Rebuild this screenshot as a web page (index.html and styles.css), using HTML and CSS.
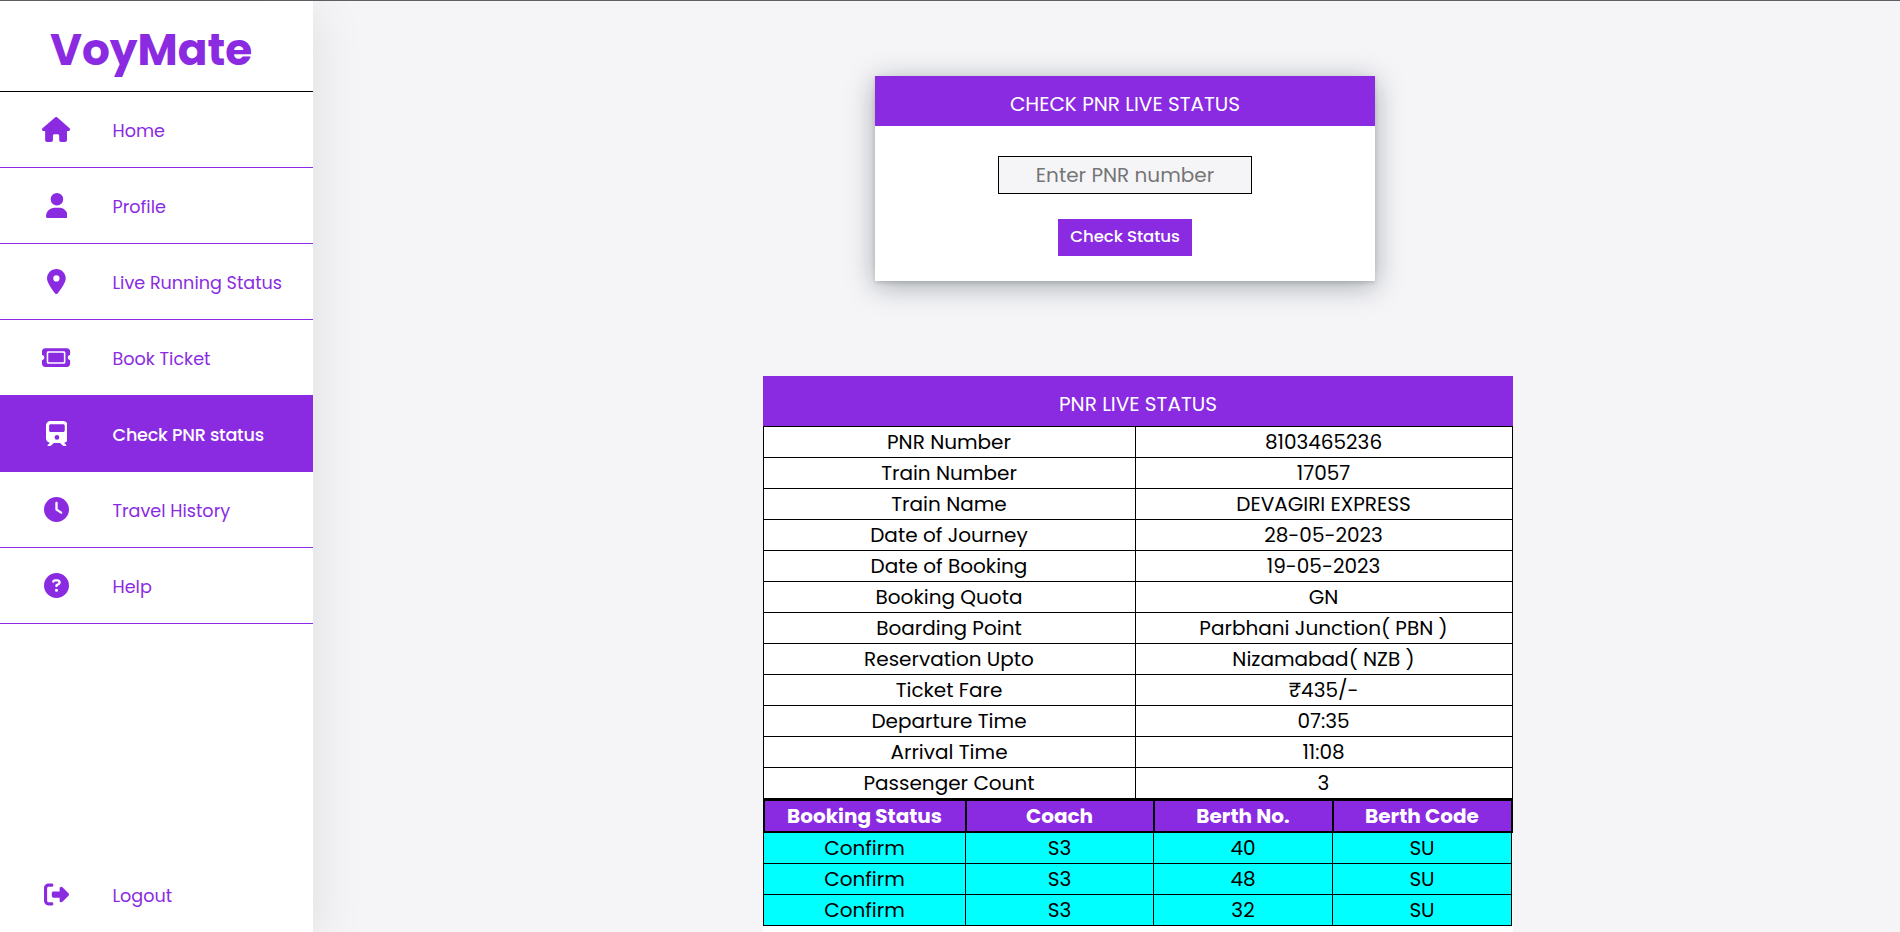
FILE: index.html
```html
<!DOCTYPE html>
<html lang="en">
<head>
<meta charset="utf-8">
<title>VoyMate - Check PNR status</title>
<link rel="stylesheet" href="styles.css">
</head>
<body>
<div class="app">
  <nav class="sidebar">
    <div class="logo"><span>VoyMate</span></div>
    <a class="nav-item"><span class="icon"><svg viewBox="0 0 576 512"><path d="M575.8 255.5c0 18-15 32.1-32 32.1h-32l.7 160.2c0 2.7-.2 5.4-.5 8.1V472c0 22.1-17.9 40-40 40H456c-1.1 0-2.2 0-3.3-.1c-1.4 .1-2.8 .1-4.2 .1H416 392c-22.1 0-40-17.9-40-40V448 384c0-17.7-14.3-32-32-32H256c-17.7 0-32 14.3-32 32v64 24c0 22.1-17.9 40-40 40H160 128.1c-1.5 0-3-.1-4.5-.2c-1.2 .1-2.4 .2-3.6 .2H104c-22.1 0-40-17.9-40-40V360c0-.9 0-1.9 .1-2.8V287.6H32c-18 0-32-14-32-32.1c0-9 3-17 10-24L266.4 8c7-7 15-8 22-8s15 2 21 7L564.8 231.5c8 7 12 15 11 24z"/></svg></span><span class="label">Home</span></a>
    <a class="nav-item"><span class="icon"><svg viewBox="0 0 448 512"><path d="M224 256A128 128 0 1 0 224 0a128 128 0 1 0 0 256zm-45.7 48C79.8 304 0 383.8 0 482.3C0 498.7 13.3 512 29.7 512H418.3c16.4 0 29.7-13.3 29.7-29.7C448 383.8 368.2 304 269.7 304H178.3z"/></svg></span><span class="label">Profile</span></a>
    <a class="nav-item"><span class="icon"><svg viewBox="0 0 384 512"><path d="M215.7 499.2C267 435 384 279.4 384 192C384 86 298 0 192 0S0 86 0 192c0 87.4 117 243 168.3 307.2c12.3 15.3 35.1 15.3 47.4 0zM192 128a64 64 0 1 1 0 128 64 64 0 1 1 0-128z"/></svg></span><span class="label">Live Running Status</span></a>
    <a class="nav-item"><span class="icon"><svg viewBox="0 0 576 512"><path d="M64 64C28.7 64 0 92.7 0 128v64c0 8.8 7.4 15.7 15.7 18.6C34.5 217.1 48 235 48 256s-13.5 38.9-32.3 45.4C7.4 304.3 0 311.2 0 320v64c0 35.3 28.7 64 64 64H512c35.3 0 64-28.7 64-64V320c0-8.8-7.4-15.7-15.7-18.6C541.5 294.9 528 277 528 256s13.5-38.9 32.3-45.4c8.3-2.9 15.7-9.8 15.7-18.6V128c0-35.3-28.7-64-64-64H64zm64 112l0 160c0 8.8 7.2 16 16 16H432c8.8 0 16-7.2 16-16V176c0-8.8-7.2-16-16-16H144c-8.8 0-16 7.2-16 16zM96 160c0-17.7 14.3-32 32-32H448c17.7 0 32 14.3 32 32V352c0 17.7-14.3 32-32 32H128c-17.7 0-32-14.3-32-32V160z"/></svg></span><span class="label">Book Ticket</span></a>
    <a class="nav-item active"><span class="icon"><svg viewBox="0 0 448 512"><path d="M96 0C43 0 0 43 0 96V352c0 48 35.2 87.7 81.1 94.9l-46 46C28.1 499.9 33.1 512 43 512H82.7c8.5 0 16.6-3.4 22.6-9.4L160 448H288l54.6 54.6c6 6 14.1 9.4 22.6 9.4H405c10 0 15-12.1 7.9-19.1l-46-46c46-7.1 81.1-46.9 81.1-94.9V96c0-53-43-96-96-96H96zM64 96c0-17.7 14.3-32 32-32H352c17.7 0 32 14.3 32 32v96c0 17.7-14.3 32-32 32H96c-17.7 0-32-14.3-32-32V96zM224 288a48 48 0 1 1 0 96 48 48 0 1 1 0-96z"/></svg></span><span class="label">Check PNR status</span></a>
    <a class="nav-item"><span class="icon"><svg viewBox="0 0 512 512"><path d="M256 0a256 256 0 1 1 0 512A256 256 0 1 1 256 0zM232 120V256c0 8 4 15.5 10.7 20l96 64c11 7.4 25.9 4.4 33.3-6.7s4.4-25.9-6.7-33.3L280 243.2V120c0-13.3-10.7-24-24-24s-24 10.7-24 24z"/></svg></span><span class="label">Travel History</span></a>
    <a class="nav-item"><span class="icon"><svg viewBox="0 0 512 512"><path d="M256 512A256 256 0 1 0 256 0a256 256 0 1 0 0 512zM169.8 165.3c7.9-22.3 29.1-37.3 52.8-37.3h58.3c34.9 0 63.1 28.3 63.1 63.1c0 22.6-12.1 43.5-31.7 54.8L280 264.4c-.2 13-10.9 23.6-24 23.6c-13.3 0-24-10.7-24-24V250.5c0-8.6 4.6-16.5 12.1-20.8l44.3-25.4c4.7-2.7 7.6-7.7 7.6-13.1c0-8.4-6.8-15.1-15.1-15.1H222.6c-3.4 0-6.4 2.1-7.5 5.3l-.4 1.2c-4.4 12.5-18.2 19-30.6 14.6s-19-18.2-14.6-30.6l.4-1.2zM224 352a32 32 0 1 1 64 0 32 32 0 1 1 -64 0z"/></svg></span><span class="label">Help</span></a>
    <a class="nav-item logout"><span class="icon"><svg viewBox="0 0 512 512"><path d="M377.9 105.9L500.7 228.7c7.2 7.2 11.3 17.1 11.3 27.3s-4.1 20.1-11.3 27.3L377.9 406.1c-6.4 6.4-15 9.9-24 9.9c-18.7 0-33.9-15.2-33.9-33.9l0-62.1-128 0c-17.7 0-32-14.3-32-32l0-64c0-17.7 14.3-32 32-32l128 0 0-62.1c0-18.7 15.2-33.9 33.9-33.9c9 0 17.6 3.6 24 9.9zM160 96L96 96c-17.7 0-32 14.3-32 32l0 256c0 17.7 14.3 32 32 32l64 0c17.7 0 32 14.3 32 32s-14.3 32-32 32l-64 0c-53 0-96-43-96-96L0 128C0 75 43 32 96 32l64 0c17.7 0 32 14.3 32 32s-14.3 32-32 32z"/></svg></span><span class="label">Logout</span></a>
  </nav>

  <main class="main">
    <form class="card">
      <h2 class="title">CHECK PNR LIVE STATUS</h2>
      <input class="pnr-input" type="text" placeholder="Enter PNR number">
      <button class="submit" type="button">Check Status</button>
    </form>

    <section class="result">
      <h2 class="title">PNR LIVE STATUS</h2>
      <dl class="details">
        <dt>PNR Number</dt><dd>8103465236</dd>
        <dt>Train Number</dt><dd>17057</dd>
        <dt>Train Name</dt><dd>DEVAGIRI EXPRESS</dd>
        <dt>Date of Journey</dt><dd>28-05-2023</dd>
        <dt>Date of Booking</dt><dd>19-05-2023</dd>
        <dt>Booking Quota</dt><dd>GN</dd>
        <dt>Boarding Point</dt><dd>Parbhani Junction( PBN )</dd>
        <dt>Reservation Upto</dt><dd>Nizamabad( NZB )</dd>
        <dt>Ticket Fare</dt><dd>₹435/-</dd>
        <dt>Departure Time</dt><dd>07:35</dd>
        <dt>Arrival Time</dt><dd>11:08</dd>
        <dt>Passenger Count</dt><dd>3</dd>
      </dl>
      <div class="berths head">
        <span>Booking Status</span><span>Coach</span><span>Berth No.</span><span>Berth Code</span>
      </div>
      <div class="berths"><span>Confirm</span><span>S3</span><span>40</span><span>SU</span></div>
      <div class="berths"><span>Confirm</span><span>S3</span><span>48</span><span>SU</span></div>
      <div class="berths"><span>Confirm</span><span>S3</span><span>32</span><span>SU</span></div>
    </section>
  </main>
</div>
</body>
</html>
```
FILE: styles.css
```css
* { box-sizing: border-box; margin: 0; padding: 0; }

body {
  height: 932px;
  overflow: hidden;
  background: #f5f5f8;
  font-family: Poppins, Inter, "Open Sans", sans-serif;
  font-weight: 400;
  color: #000;
}

.app {
  display: flex;
  height: 932px;
  border-top: 1px solid #606064;
}

/* Sidebar */
.sidebar {
  display: flex;
  flex-direction: column;
  width: 313px;
  flex: none;
  background: #fff;
  box-shadow: 0 10px 50px rgba(0, 0, 0, .1);
}
.logo {
  height: 91px;
  padding: 7px 0 0 50px;
  border-bottom: 1px solid #000;
  color: #8a2be2;
  font-size: 43.8px;
  line-height: 83px;
  font-weight: 700;
}
.nav-item {
  display: flex;
  align-items: center;
  height: 76px;
  padding-left: 36px;
  border-bottom: 1px solid #8a2be2;
  color: #8a2be2;
  font-size: 17.6px;
}
.nav-item .icon {
  display: flex;
  justify-content: center;
  width: 41px;
  margin-right: 35.5px;
}
.nav-item svg { height: 25px; fill: currentColor; }
.nav-item .label { padding-top: 3px; white-space: nowrap; }
.nav-item.active {
  height: 77px;
  margin-top: -1px;
  padding-top: 1px;
  background: #8a2be2;
  color: #fff;
  font-weight: 500;
  letter-spacing: -.22px;
}
.nav-item.logout { margin-top: auto; border-bottom: 0; }

/* Main column */
.main { flex: 1; padding-top: 75px; }
.title {
  width: 100%;
  height: 50px;
  padding-top: 7px;
  background: #8a2be2;
  color: #fff;
  font-size: 20px;
  font-weight: 400;
  line-height: 43px;
  text-align: center;
}
.card {
  display: flex;
  flex-direction: column;
  align-items: center;
  width: 500px;
  height: 205px;
  margin-left: 562px;
  background: #fff;
  box-shadow: 0 2px 4px rgba(10, 22, 28, .14), 0 5px 26px rgba(10, 22, 28, .34);
}
.pnr-input {
  width: 254px;
  height: 38px;
  margin-top: 30px;
  border: 1px solid #000;
  background: #f5f5f8;
  font-family: inherit;
  font-size: 20px;
  text-align: center;
}
.pnr-input::placeholder { color: #757575; }
.submit {
  width: 134px;
  height: 37px;
  margin-top: 25px;
  padding-bottom: 2px;
  border: 0;
  background: #8a2be2;
  color: #fff;
  font-family: inherit;
  font-size: 16.6px;
  font-weight: 500;
  letter-spacing: -.1px;
}

/* Result table */
.result {
  width: 750px;
  height: 556px;
  margin: 95px 0 0 450px;
  background: #fff;
  font-size: 20px;
  line-height: 30px;
  text-align: center;
}
.details { display: grid; grid-template-columns: 372px 378px; }
.details dt, .details dd {
  height: 31px;
  padding-right: 1px;
  border-top: 1px solid #000;
  border-left: 1px solid #000;
}
.details dd { border-right: 1px solid #000; }
.berths { display: grid; grid-template-columns: 202px 188px 179px 180px; }
.berths span {
  height: 31px;
  background: #0ff;
  border-left: 1px solid #000;
  border-bottom: 1px solid #000;
}
.berths span:last-child { border-right: 1px solid #000; }
.berths.head { grid-template-columns: 202px 188px 179px 181px; }
.berths.head span {
  height: 35px;
  padding-right: 1px;
  background: #8a2be2;
  color: #fff;
  font-weight: 700;
  border-top: 3px solid #000;
  border-left: 2px solid #000;
  border-bottom: 2px solid #000;
}
.berths.head span:last-child { border-right: 2px solid #000; }
```
